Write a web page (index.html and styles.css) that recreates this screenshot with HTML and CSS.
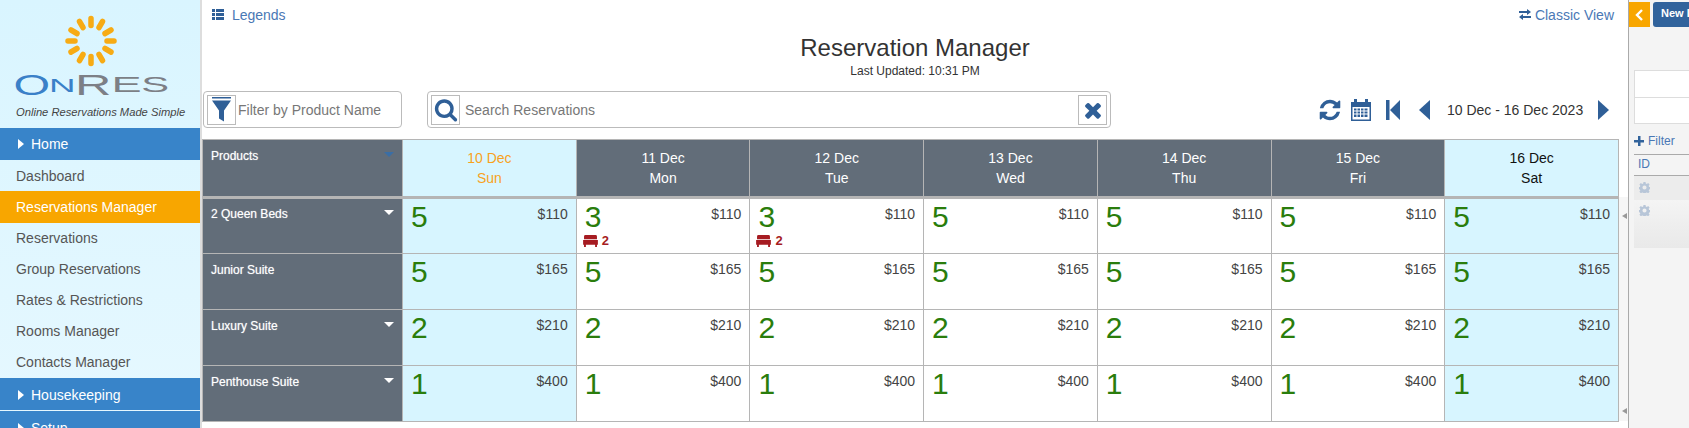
FILE: index.html
```html
<!DOCTYPE html>
<html lang="en">
<head>
    <meta charset="UTF-8">
    <meta name="viewport" content="width=device-width, initial-scale=1.0">
    <title>Reservation Manager</title>
    <link rel="stylesheet" href="styles.css">
</head>
<body>
    <svg class="defs" width="0" height="0">
        <symbol id="bed" viewBox="0 0 16 13">
            <path d="M2.500 0h11a1.500 1.500 0 0 1 1.500 1.500v3h-14v-3a1.500 1.500 0 0 1 1.500-1.500z"/>
            <path d="M0 5.500h16v5h-16zM1 10.500h2v2.500h-2zM13 10.500h2v2.500h-2z"/>
        </symbol>
        <symbol id="gear" viewBox="0 0 16 16">
            <path fill-rule="evenodd" d="M6.500 0h3l.4 2.300 1.500.6 1.900-1.300 2.100 2.100-1.300 1.900.6 1.500 2.300.4v3l-2.300.4-.6 1.500 1.300 1.900-2.100 2.100-1.900-1.300-1.500.6-.4 2.300h-3l-.4-2.300-1.500-.6-1.900 1.300-2.100-2.100 1.300-1.900-.6-1.500-2.300-.4v-3l2.300-.4.6-1.500-1.300-1.900 2.100-2.100 1.900 1.300 1.500-.6zM8 5a3 3 0 1 0 0 6 3 3 0 0 0 0-6z"/>
        </symbol>
    </svg>

    <aside class="sidebar">
        <div class="brand">
            <svg class="logo" width="200" height="100" viewBox="0 0 200 100">
                <g stroke="#f7ab14" stroke-width="5.500" stroke-linecap="round">
                    <path d="M91 18.500v7M102.500 21.500l-3.500 6M111 30l-6 3.500M114 41h-7M111 52l-6-3.500M102.500 60.500l-3.500-6M91 63.500v-7M79.500 60.500l3.500-6M71 52l6-3.500M68 41h7M71 30l6 3.500M79.500 21.500l3.500 6"/>
                </g>
                <g class="logo-text">
                    <text transform="translate(13.600 95) scale(1.570 1)" font-size="30" fill="#3a80c8">O</text>
                    <text transform="translate(49 92) scale(2.100 1)" font-size="17.500" fill="#3a80c8">N</text>
                    <text transform="translate(75 95) scale(1.680 1)" font-size="30" fill="#7c7f86">R</text>
                    <text transform="translate(111.400 92) scale(2.050 1)" font-size="22" fill="#7c7f86">E</text>
                    <text transform="translate(141.300 92) scale(1.900 1)" font-size="22" fill="#7c7f86">S</text>
                </g>
            </svg>
            <p class="tagline">Online Reservations Made Simple</p>
        </div>
        <nav>
            <a class="nav-head"><span class="nav-arrow"></span>Home</a>
            <a class="nav-item">Dashboard</a>
            <a class="nav-item active">Reservations Manager</a>
            <a class="nav-item">Reservations</a>
            <a class="nav-item">Group Reservations</a>
            <a class="nav-item">Rates &amp; Restrictions</a>
            <a class="nav-item">Rooms Manager</a>
            <a class="nav-item">Contacts Manager</a>
            <a class="nav-head"><span class="nav-arrow"></span>Housekeeping</a>
            <a class="nav-head"><span class="nav-arrow"></span>Setup</a>
        </nav>
    </aside>

    <main class="main">
        <div class="topbar">
            <a class="link">
                <svg class="link-icon" width="12" height="11" viewBox="0 0 12 11"><path d="M0 0h3v3h-3zM4 0h8v3h-8zM0 4h3v3h-3zM4 4h8v3h-8zM0 8h3v3h-3zM4 8h8v3h-8z"/></svg>
                Legends
            </a>
            <a class="link link-classic">
                <svg class="link-icon" width="12" height="11" viewBox="0 0 12 11"><path d="M0 2h8v-2l4 3-4 3v-2h-8zM12 7h-8v-2l-4 3 4 3v-2h8z"/></svg>
                Classic View
            </a>
        </div>

        <div class="heading">
            <h1>Reservation Manager</h1>
            <p>Last Updated: 10:31 PM</p>
        </div>

        <div class="toolbar">
            <div class="field field-filter">
                <span class="field-btn">
                    <svg width="20" height="25" viewBox="0 0 20 25"><path d="M0 0h19v1.500h-19zM0 3.500h19l-7 10v11l-5-3v-8z"/></svg>
                </span>
                <span class="field-text">Filter by Product Name</span>
            </div>
            <div class="field field-search">
                <span class="field-btn">
                    <svg width="24" height="25" viewBox="0 0 1792 1792"><path d="M1216 832q0-185-131.500-316.500t-316.500-131.500-316.500 131.500-131.500 316.500 131.500 316.500 316.500 131.500 316.500-131.500 131.500-316.500zm512 832q0 52-38 90t-90 38q-54 0-90-38l-343-342q-179 124-399 124-143 0-273.500-55.500t-225-150-150-225-55.500-273.500 55.500-273.500 150-225 225-150 273.500-55.500 273.500 55.500 225 150 150 225 55.500 273.500q0 220-124 399l343 343q37 37 37 90z"/></svg>
                </span>
                <span class="field-text">Search Reservations</span>
                <span class="field-btn field-clear">
                    <svg width="24" height="24" viewBox="0 0 1792 1792"><path d="M1490 1322q0 40-28 68l-136 136q-28 28-68 28t-68-28l-294-294-294 294q-28 28-68 28t-68-28l-136-136q-28-28-28-68t28-68l294-294-294-294q-28-28-28-68t28-68l136-136q28-28 68-28t68 28l294 294 294-294q28-28 68-28t68 28l136 136q28 28 28 68t-28 68l-294 294 294 294q28 28 28 68z"/></svg>
                </span>
            </div>
            <div class="week-nav">
                <svg class="nav-refresh" width="24" height="24" viewBox="0 0 1792 1792"><path d="M1639 1056q0 5-1 7-64 268-268 434.500t-478 166.500q-146 0-282.500-55t-243.500-157l-129 129q-19 19-45 19t-45-19-19-45v-448q0-26 19-45t45-19h448q26 0 45 19t19 45-19 45l-137 137q71 66 161 102t187 36q134 0 250-65t186-179q11-17 53-117 8-23 30-23h192q13 0 22.500 9.500t9.500 22.500zm25-800v448q0 26-19 45t-45 19h-448q-26 0-45-19t-19-45 19-45l138-138q-148-137-349-137-134 0-250 65t-186 179q-11 17-53 117-8 23-30 23h-199q-13 0-22.500-9.500t-9.500-22.500v-7q65-268 270-434.500t480-166.500q146 0 284 55.500t245 156.500l130-129q19-19 45-19t45 19 19 45z"/></svg>
                <svg class="nav-cal" width="20" height="22" viewBox="0 0 20 22"><path fill-rule="evenodd" d="M3 0h3v3h8v-3h3v3h3v19h-20v-19h3zM1.500 8v12.500h17v-12.500zM3 9.500h2.500v2h-2.500zM6.500 9.500h2.500v2h-2.500zM10 9.500h2.500v2h-2.500zM13.500 9.500h3v2h-3zM3 12.500h2.500v2h-2.500zM6.500 12.500h2.500v2h-2.500zM10 12.500h2.500v2h-2.500zM13.500 12.500h3v2h-3zM3 15.500h2.500v2.500h-2.500zM6.500 15.500h2.500v2.500h-2.500zM10 15.500h2.500v2.500h-2.500zM13.500 15.500h3v2.500h-3z"/></svg>
                <svg class="nav-first" width="14" height="20" viewBox="0 0 14 20"><path d="M0 0h3.500v20h-3.500zM14 0v20l-10-10z"/></svg>
                <svg class="nav-prev" width="12" height="20" viewBox="0 0 12 20"><path d="M11 0v20l-11-10z"/></svg>
                <span class="week-label">10 Dec - 16 Dec 2023</span>
                <svg class="nav-next" width="12" height="20" viewBox="0 0 12 20"><path d="M1 0v20l11-10z"/></svg>
            </div>
        </div>

        <div class="grid-wrap">
            <table class="grid">
                <thead>
                    <tr>
                        <th class="product"><div class="product-row">Products<span class="caret caret-blue"></span></div></th>
                        <th class="weekend today">10 Dec<br>Sun</th>
                        <th>11 Dec<br>Mon</th>
                        <th>12 Dec<br>Tue</th>
                        <th>13 Dec<br>Wed</th>
                        <th>14 Dec<br>Thu</th>
                        <th>15 Dec<br>Fri</th>
                        <th class="weekend">16 Dec<br>Sat</th>
                    </tr>
                </thead>
                <tbody>
                    <tr>
                        <th class="product"><div class="product-row">2 Queen Beds<span class="caret"></span></div></th>
                        <td class="weekend"><div class="rate"><b>5</b><span>$110</span></div></td>
                        <td><div class="rate"><b>3</b><span>$110</span></div><div class="beds"><svg width="15" height="12"><use href="#bed"/></svg>2</div></td>
                        <td><div class="rate"><b>3</b><span>$110</span></div><div class="beds"><svg width="15" height="12"><use href="#bed"/></svg>2</div></td>
                        <td><div class="rate"><b>5</b><span>$110</span></div></td>
                        <td><div class="rate"><b>5</b><span>$110</span></div></td>
                        <td><div class="rate"><b>5</b><span>$110</span></div></td>
                        <td class="weekend"><div class="rate"><b>5</b><span>$110</span></div></td>
                    </tr>
                    <tr>
                        <th class="product"><div class="product-row">Junior Suite</div></th>
                        <td class="weekend"><div class="rate"><b>5</b><span>$165</span></div></td>
                        <td><div class="rate"><b>5</b><span>$165</span></div></td>
                        <td><div class="rate"><b>5</b><span>$165</span></div></td>
                        <td><div class="rate"><b>5</b><span>$165</span></div></td>
                        <td><div class="rate"><b>5</b><span>$165</span></div></td>
                        <td><div class="rate"><b>5</b><span>$165</span></div></td>
                        <td class="weekend"><div class="rate"><b>5</b><span>$165</span></div></td>
                    </tr>
                    <tr>
                        <th class="product"><div class="product-row">Luxury Suite<span class="caret"></span></div></th>
                        <td class="weekend"><div class="rate"><b>2</b><span>$210</span></div></td>
                        <td><div class="rate"><b>2</b><span>$210</span></div></td>
                        <td><div class="rate"><b>2</b><span>$210</span></div></td>
                        <td><div class="rate"><b>2</b><span>$210</span></div></td>
                        <td><div class="rate"><b>2</b><span>$210</span></div></td>
                        <td><div class="rate"><b>2</b><span>$210</span></div></td>
                        <td class="weekend"><div class="rate"><b>2</b><span>$210</span></div></td>
                    </tr>
                    <tr>
                        <th class="product"><div class="product-row">Penthouse Suite<span class="caret"></span></div></th>
                        <td class="weekend"><div class="rate"><b>1</b><span>$400</span></div></td>
                        <td><div class="rate"><b>1</b><span>$400</span></div></td>
                        <td><div class="rate"><b>1</b><span>$400</span></div></td>
                        <td><div class="rate"><b>1</b><span>$400</span></div></td>
                        <td><div class="rate"><b>1</b><span>$400</span></div></td>
                        <td><div class="rate"><b>1</b><span>$400</span></div></td>
                        <td class="weekend"><div class="rate"><b>1</b><span>$400</span></div></td>
                    </tr>
                </tbody>
            </table>
            <div class="splitter"><i></i><i></i></div>
        </div>
    </main>

    <aside class="panel">
        <div class="panel-inner">
            <div class="panel-top">
                <span class="panel-toggle">
                    <svg width="9" height="12" viewBox="0 0 9 12"><path d="M7 1l-5 5 5 5" fill="none" stroke="#fff" stroke-width="2.400"/></svg>
                </span>
                <span class="panel-new">New Item</span>
            </div>
            <div class="panel-inputs"><div></div><div></div></div>
            <div class="panel-filter">
                <svg width="10" height="10" viewBox="0 0 10 10"><path d="M4 0h2.500v4h3.500v2.500h-3.500v3.500h-2.500v-3.500h-4v-2.500h4z"/></svg>
                Filter
            </div>
            <div class="panel-head">ID</div>
            <div class="panel-row"><svg width="11" height="11"><use href="#gear"/></svg></div>
            <div class="panel-row panel-row-alt"><svg width="11" height="11"><use href="#gear"/></svg></div>
            <div class="panel-foot"></div>
        </div>
    </aside>
</body>
</html>
```

FILE: styles.css
```css
* { box-sizing: border-box; }
html, body { margin: 0; height: 428px; overflow: hidden; }
body { display: flex; font-family: "Liberation Sans", Arial, sans-serif; font-size: 14px; color: #333; background: #fff; }
.defs { display: block; position: absolute; }

/* sidebar */
.sidebar { flex: 0 0 202px; height: 428px; border-right: 2px solid #ddd; background: linear-gradient(#d9f5ff, #e6f8ff); overflow: hidden; }
.brand { height: 128px; }
.logo { display: block; }
.logo-text text { font-family: "Liberation Sans", Arial, sans-serif; }
.tagline { margin: 6px 0 0 16px; font-size: 11.200px; font-style: italic; color: #444; white-space: nowrap; }
.nav-head { display: flex; align-items: center; height: 32px; padding-left: 18px; margin-bottom: 1px; background: #3884c9; color: #fff; }
.nav-head:first-child { margin-bottom: 0; }
.nav-arrow { width: 0; height: 0; margin-right: 7px; border-left: 6px solid #fff; border-top: 5px solid transparent; border-bottom: 5px solid transparent; }
.nav-item { display: flex; align-items: center; height: 31px; padding-left: 16px; color: #555; }
.nav-item.active { height: 32px; background: #f8a600; color: #fff; }
.nav-item.active ~ .nav-item { padding-bottom: 2px; }
.nav-item.active ~ .nav-head { padding-top: 2px; }
.nav-item:last-of-type { height: 32px; }

/* main column */
.main { flex: 0 0 1426px; height: 428px; }
.topbar { display: flex; justify-content: space-between; height: 30px; padding: 7px 14px 0 10px; }
.link { color: #4a78b5; }
.link-icon { margin-right: 4px; fill: #2f5f97; }
.link-classic .link-icon { margin-right: 0; }
.heading { height: 58px; text-align: center; }
.heading h1 { margin: 3px 0 0; font-size: 24px; font-weight: normal; line-height: 30px; color: #333; }
.heading p { margin: 1px 0 0; font-size: 12px; line-height: 14px; color: #333; }

.toolbar { display: flex; align-items: stretch; height: 38px; margin-left: 1px; margin-bottom: 10px; }
.field { display: flex; align-items: center; height: 37px; padding: 0 3px; border: 1px solid #bbb; border-radius: 4px; }
.field-filter { flex: 0 0 199px; }
.field-search { flex: 0 0 684px; margin-left: 25px; }
.field-btn { display: flex; align-items: center; justify-content: center; flex: 0 0 29px; height: 30px; border: 1px solid #bbb; fill: #2f5f97; }
.field-text { margin-left: 5px; color: #777; white-space: nowrap; }
.field-filter .field-text { margin-left: 2px; }
.field-clear { margin-left: auto; }

.week-nav { display: flex; align-items: center; height: 38px; margin-left: 207px; fill: #2f5f97; }
.week-nav svg { flex: none; }
.nav-cal { margin-left: 9px; }
.nav-first { margin-left: 15px; }
.nav-prev { margin-left: 19px; }
.week-label { margin-left: 16px; color: #333; white-space: nowrap; }
.nav-next { margin-left: 14px; }

/* reservation grid */
.grid-wrap { display: flex; margin-left: 0; }
.grid { flex: none; width: 1417px; table-layout: fixed; border-collapse: collapse; border: 1px solid #b5b5b5; }
.grid th, .grid td { border: 1px solid #b5b5b5; padding: 0; vertical-align: top; }
.grid thead th { height: 58px; padding-top: 8px; border-bottom-width: 3px; font-size: 14px; font-weight: normal; line-height: 20px; text-align: center; background: #626d79; color: #fff; }
.grid thead th.product { width: 200px; }
.grid thead th.product .product-row { padding-top: 0; }
.grid thead th.weekend { background: #d7f5ff; color: #111; }
.grid thead th.today { color: #f8a21c; }
.grid tbody tr { height: 56px; }
.grid tbody th.product { background: #626d79; }
.grid tbody tr + tr .product-row { padding-top: 8px; }
.product-row { display: flex; justify-content: space-between; padding: 7px 8px 0 8px; font-size: 12px; font-weight: normal; line-height: 16px; color: #fff; text-align: left; text-shadow: 0 0 1px rgba(255, 255, 255, .6); }
.caret { width: 0; height: 0; margin-top: 4px; border-top: 5px solid #fff; border-left: 5px solid transparent; border-right: 5px solid transparent; }
.caret-blue { border-top-color: #3a6ea5; }
.grid td.weekend { background: #d7f5ff; }
.rate { display: flex; justify-content: space-between; padding: 2px 8px 0 8px; }
.rate b { font-size: 30px; font-weight: normal; line-height: 32px; color: #2a7d0c; }
.rate span { margin-top: 4px; line-height: 18px; color: #444; }
.beds { display: flex; align-items: center; gap: 4px; margin: 1px 0 0 6px; font-size: 13px; font-weight: bold; line-height: 14px; color: #a61c22; fill: #a61c22; }

.splitter { display: flex; flex-direction: column; justify-content: space-between; width: 9px; height: 224px; margin-top: 58px; padding: 16px 0 7px 3px; background: #f6f6f6; }
.splitter i { width: 0; height: 0; border-top: 3px solid transparent; border-bottom: 3px solid transparent; border-right: 5px solid #999; }

/* right side panel, cut off by the window */
.panel { flex: 0 0 61px; height: 428px; border-left: 1px solid #aaa; background: #f4f4f4; overflow: hidden; }
.panel-inner { width: 300px; }
.panel-top { display: flex; height: 27px; padding-top: 2px; }
.panel-toggle { display: flex; align-items: center; justify-content: center; width: 21px; height: 25px; background: #f8a600; }
.panel-new { height: 25px; margin-left: 3px; padding: 0 8px; border-radius: 3px; background: #31639c; color: #fff; font-size: 11px; font-weight: bold; line-height: 23px; }
.panel-inputs { margin: 43px 0 0 5px; border: 1px solid #ddd; background: #fff; }
.panel-inputs div { height: 26px; }
.panel-inputs div + div { border-top: 1px solid #ddd; }
.panel-filter { display: flex; align-items: center; gap: 4px; height: 30px; margin-left: 5px; padding-top: 4px; font-size: 12px; color: #4a78b5; fill: #31639c; }
.panel-head { height: 22px; margin-left: 5px; padding-left: 4px; border-top: 1px solid #aaa; border-bottom: 1px solid #aaa; font-size: 12px; line-height: 18px; color: #4a78b5; }
.panel-row { height: 24px; margin-left: 5px; padding: 6px 0 0 5px; background: #ececec; fill: #b8c6d8; }
.panel-row-alt { height: 25px; padding-top: 5px; background: linear-gradient(#f4f4f4, #eee); }
.panel-row svg { display: block; }
.panel-foot { height: 23px; margin-left: 5px; background: linear-gradient(#eee, #e9e9e9); }
```
